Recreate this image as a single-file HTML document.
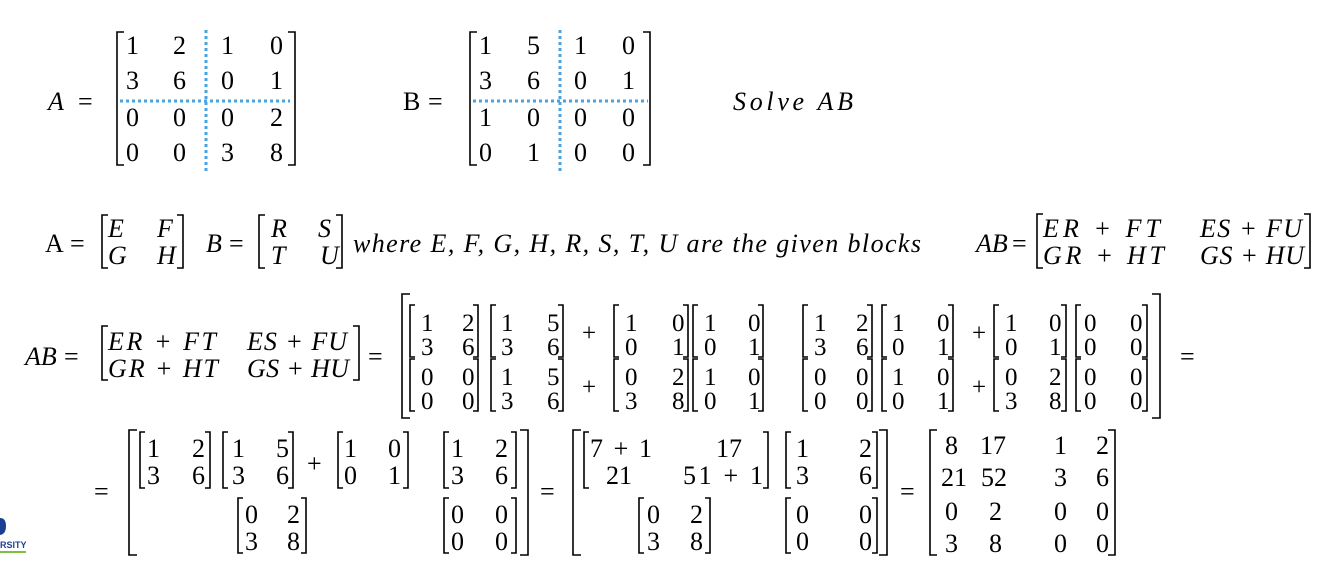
<!DOCTYPE html>
<html><head><meta charset="utf-8"><style>
html,body{margin:0;padding:0;background:#fff;}
svg{display:block}
text{font-family:"Liberation Serif",serif;font-size:26px;fill:#000}
.i{font-style:italic}
g.s text{font-size:25px}
path.b{fill:none;stroke:#000;stroke-width:1.6}
</style></head><body>
<svg width="1332" height="566" viewBox="0 0 1332 566" xmlns="http://www.w3.org/2000/svg">
<!-- Row 1: A -->
<text x="48" y="110" class="i">A</text><text x="78" y="110">=</text>
<path class="b" d="M124 32H117V165H124"/><path class="b" d="M288 32H295V165H288"/>
<g>
<text x="126" y="54">1</text><text x="173" y="54">2</text><text x="221" y="54">1</text><text x="270" y="54">0</text>
<text x="126" y="89">3</text><text x="173" y="89">6</text><text x="221" y="89">0</text><text x="270" y="89">1</text>
<text x="126" y="126">0</text><text x="173" y="126">0</text><text x="221" y="126">0</text><text x="270" y="126">2</text>
<text x="126" y="161">0</text><text x="173" y="161">0</text><text x="221" y="161">3</text><text x="270" y="161">8</text>
</g>
<path d="M206 30V174" stroke="#4aa3df" stroke-width="3" stroke-dasharray="3,3"/>
<path d="M120 101H290" stroke="#4aa3df" stroke-width="3" stroke-dasharray="3,3"/>
<!-- B -->
<text x="403" y="110">B</text><text x="428" y="110">=</text>
<path class="b" d="M477 32H470V165H477"/><path class="b" d="M643 32H650V165H643"/>
<text x="479" y="54">1</text><text x="527" y="54">5</text><text x="574" y="54">1</text><text x="622" y="54">0</text>
<text x="479" y="89">3</text><text x="527" y="89">6</text><text x="574" y="89">0</text><text x="622" y="89">1</text>
<text x="479" y="126">1</text><text x="527" y="126">0</text><text x="574" y="126">0</text><text x="622" y="126">0</text>
<text x="479" y="161">0</text><text x="527" y="161">1</text><text x="574" y="161">0</text><text x="622" y="161">0</text>
<path d="M560 30V174" stroke="#4aa3df" stroke-width="3" stroke-dasharray="3,3"/>
<path d="M473 101H648" stroke="#4aa3df" stroke-width="3" stroke-dasharray="3,3"/>
<text x="733" y="110" class="i" textLength="120">Solve AB</text>

<!-- Row 2 -->
<text x="45" y="252">A</text><text x="70" y="252">=</text>
<path class="b" d="M108 215H102V268H108"/><path class="b" d="M177 215H183V268H177"/>
<text x="108" y="237" class="i">E</text><text x="157" y="237" class="i">F</text>
<text x="108" y="264" class="i">G</text><text x="157" y="264" class="i">H</text>
<text x="206" y="252" class="i">B</text><text x="229" y="252">=</text>
<path class="b" d="M265 215H259V268H265"/><path class="b" d="M336 215H342V268H336"/>
<text x="271" y="237" class="i">R</text><text x="318" y="237" class="i">S</text>
<text x="271" y="264" class="i">T</text><text x="320" y="264" class="i">U</text>
<text x="353" y="252" class="i" textLength="568">where E, F, G, H, R, S, T, U are the given blocks</text>
<text x="976" y="252" class="i">AB</text><text x="1012" y="252">=</text>
<path class="b" d="M1043 214H1037V268H1043"/><path class="b" d="M1304 214H1310V268H1304"/>
<text x="1043" y="237" class="i" textLength="117">ER + FT</text><text x="1200" y="237" class="i" textLength="102">ES + FU</text>
<text x="1043" y="264" class="i" textLength="121">GR + HT</text><text x="1200" y="264" class="i" textLength="104">GS + HU</text>

<!-- Row 3 -->
<text x="25" y="365" class="i">AB</text><text x="64" y="365">=</text>
<path class="b" d="M108 326H102V380H108"/><path class="b" d="M353 326H359V380H353"/>
<text x="108" y="350" class="i" textLength="108">ER + FT</text><text x="247" y="350" class="i" textLength="100">ES + FU</text>
<text x="108" y="377" class="i" textLength="110">GR + HT</text><text x="247" y="377" class="i" textLength="102">GS + HU</text>
<text x="368" y="365">=</text>
<path class="b" d="M410 294H402V418H410"/><path class="b" d="M1152 294H1160V418H1152"/>
<text x="1180" y="365">=</text>
<g class="s">
<path class="b" d="M415 305H410V357H415"/><path class="b" d="M473 305H478V357H473"/>
<text x="421" y="331">1</text><text x="462" y="331">2</text><text x="421" y="355">3</text><text x="462" y="355">6</text>
<path class="b" d="M496 305H491V357H496"/><path class="b" d="M558 305H563V357H558"/>
<text x="501" y="331">1</text><text x="547" y="331">5</text><text x="501" y="355">3</text><text x="547" y="355">6</text>
<text x="582" y="341">+</text>
<path class="b" d="M619 305H614V357H619"/><path class="b" d="M683 305H688V357H683"/>
<text x="625" y="331">1</text><text x="672" y="331">0</text><text x="625" y="355">0</text><text x="672" y="355">1</text>
<path class="b" d="M698 305H693V357H698"/><path class="b" d="M758 305H763V357H758"/>
<text x="704" y="331">1</text><text x="748" y="331">0</text><text x="704" y="355">0</text><text x="748" y="355">1</text>
<path class="b" d="M808 305H803V357H808"/><path class="b" d="M867 305H872V357H867"/>
<text x="814" y="331">1</text><text x="856" y="331">2</text><text x="814" y="355">3</text><text x="856" y="355">6</text>
<path class="b" d="M887 305H882V357H887"/><path class="b" d="M948 305H953V357H948"/>
<text x="892" y="331">1</text><text x="937" y="331">0</text><text x="892" y="355">0</text><text x="937" y="355">1</text>
<text x="972" y="341">+</text>
<path class="b" d="M999 305H994V357H999"/><path class="b" d="M1061 305H1066V357H1061"/>
<text x="1005" y="331">1</text><text x="1049" y="331">0</text><text x="1005" y="355">0</text><text x="1049" y="355">1</text>
<path class="b" d="M1081 305H1076V357H1081"/><path class="b" d="M1142 305H1147V357H1142"/>
<text x="1084" y="331">0</text><text x="1130" y="331">0</text><text x="1084" y="355">0</text><text x="1130" y="355">0</text>
</g>
<g class="s" transform="translate(0,54)">
<path class="b" d="M415 305H410V357H415"/><path class="b" d="M473 305H478V357H473"/>
<text x="421" y="331">0</text><text x="462" y="331">0</text><text x="421" y="355">0</text><text x="462" y="355">0</text>
<path class="b" d="M496 305H491V357H496"/><path class="b" d="M558 305H563V357H558"/>
<text x="501" y="331">1</text><text x="547" y="331">5</text><text x="501" y="355">3</text><text x="547" y="355">6</text>
<text x="582" y="341">+</text>
<path class="b" d="M619 305H614V357H619"/><path class="b" d="M683 305H688V357H683"/>
<text x="625" y="331">0</text><text x="672" y="331">2</text><text x="625" y="355">3</text><text x="672" y="355">8</text>
<path class="b" d="M698 305H693V357H698"/><path class="b" d="M758 305H763V357H758"/>
<text x="704" y="331">1</text><text x="748" y="331">0</text><text x="704" y="355">0</text><text x="748" y="355">1</text>
<path class="b" d="M808 305H803V357H808"/><path class="b" d="M867 305H872V357H867"/>
<text x="814" y="331">0</text><text x="856" y="331">0</text><text x="814" y="355">0</text><text x="856" y="355">0</text>
<path class="b" d="M887 305H882V357H887"/><path class="b" d="M948 305H953V357H948"/>
<text x="892" y="331">1</text><text x="937" y="331">0</text><text x="892" y="355">0</text><text x="937" y="355">1</text>
<text x="972" y="341">+</text>
<path class="b" d="M999 305H994V357H999"/><path class="b" d="M1061 305H1066V357H1061"/>
<text x="1005" y="331">0</text><text x="1049" y="331">2</text><text x="1005" y="355">3</text><text x="1049" y="355">8</text>
<path class="b" d="M1081 305H1076V357H1081"/><path class="b" d="M1142 305H1147V357H1142"/>
<text x="1084" y="331">0</text><text x="1130" y="331">0</text><text x="1084" y="355">0</text><text x="1130" y="355">0</text>
</g>

<!-- Row 4 -->
<text x="94" y="500">=</text>
<path class="b" d="M137 430H129V555H137"/><path class="b" d="M520 430H528V555H520"/>
<path class="b" d="M145 432H140V488H145"/><path class="b" d="M205 432H210V488H205"/>
<text x="147" y="457">1</text><text x="192" y="457">2</text><text x="147" y="484">3</text><text x="192" y="484">6</text>
<path class="b" d="M228 432H223V488H228"/><path class="b" d="M288 432H293V488H288"/>
<text x="232" y="457">1</text><text x="276" y="457">5</text><text x="232" y="484">3</text><text x="276" y="484">6</text>
<text x="307" y="472">+</text>
<path class="b" d="M343 432H338V488H343"/><path class="b" d="M403 432H408V488H403"/>
<text x="344" y="457">1</text><text x="388" y="457">0</text><text x="344" y="484">0</text><text x="388" y="484">1</text>
<path class="b" d="M449 432H444V488H449"/><path class="b" d="M511 432H516V488H511"/>
<text x="451" y="457">1</text><text x="495" y="457">2</text><text x="451" y="484">3</text><text x="495" y="484">6</text>
<path class="b" d="M243 498H238V553H243"/><path class="b" d="M301 498H306V553H301"/>
<text x="245" y="523">0</text><text x="287" y="523">2</text><text x="245" y="550">3</text><text x="287" y="550">8</text>
<path class="b" d="M449 498H444V553H449"/><path class="b" d="M511 498H516V553H511"/>
<text x="451" y="523">0</text><text x="495" y="523">0</text><text x="451" y="550">0</text><text x="495" y="550">0</text>
<text x="540" y="500">=</text>
<path class="b" d="M581 430H573V555H581"/><path class="b" d="M879 430H887V555H879"/>
<path class="b" d="M589 432H584V488H589"/><path class="b" d="M763 432H768V488H763"/>
<text x="590" y="457" textLength="62">7 + 1</text><text x="716" y="457">17</text>
<text x="606" y="484">21</text><text x="683" y="484" textLength="80">51 + 1</text>
<path class="b" d="M791 432H786V488H791"/><path class="b" d="M872 432H877V488H872"/>
<text x="796" y="457">1</text><text x="859" y="457">2</text><text x="796" y="484">3</text><text x="859" y="484">6</text>
<path class="b" d="M644 498H639V553H644"/><path class="b" d="M705 498H710V553H705"/>
<text x="647" y="523">0</text><text x="690" y="523">2</text><text x="647" y="550">3</text><text x="690" y="550">8</text>
<path class="b" d="M791 498H786V553H791"/><path class="b" d="M872 498H877V553H872"/>
<text x="796" y="523">0</text><text x="859" y="523">0</text><text x="796" y="550">0</text><text x="859" y="550">0</text>
<text x="900" y="500">=</text>
<path class="b" d="M937 430H930V555H937"/><path class="b" d="M1108 430H1115V555H1108"/>
<text x="945" y="454">8</text><text x="980" y="454">17</text><text x="1054" y="454">1</text><text x="1096" y="454">2</text>
<text x="941" y="486">21</text><text x="981" y="486">52</text><text x="1054" y="486">3</text><text x="1096" y="486">6</text>
<text x="945" y="520">0</text><text x="989" y="520">2</text><text x="1054" y="520">0</text><text x="1096" y="520">0</text>
<text x="945" y="552">3</text><text x="989" y="552">8</text><text x="1054" y="552">0</text><text x="1096" y="552">0</text>

<!-- logo fragment -->
<path d="M0 518 Q6 518 6 526 Q6 534 0 535 Z" fill="#1c3f94"/>
<text x="0" y="548" style="font-family:'Liberation Sans',sans-serif;font-size:9px;font-weight:bold;fill:#1c3f94">RSITY</text>
<rect x="0" y="551" width="26" height="2" fill="#7bc043"/>
</svg>
</body></html>
